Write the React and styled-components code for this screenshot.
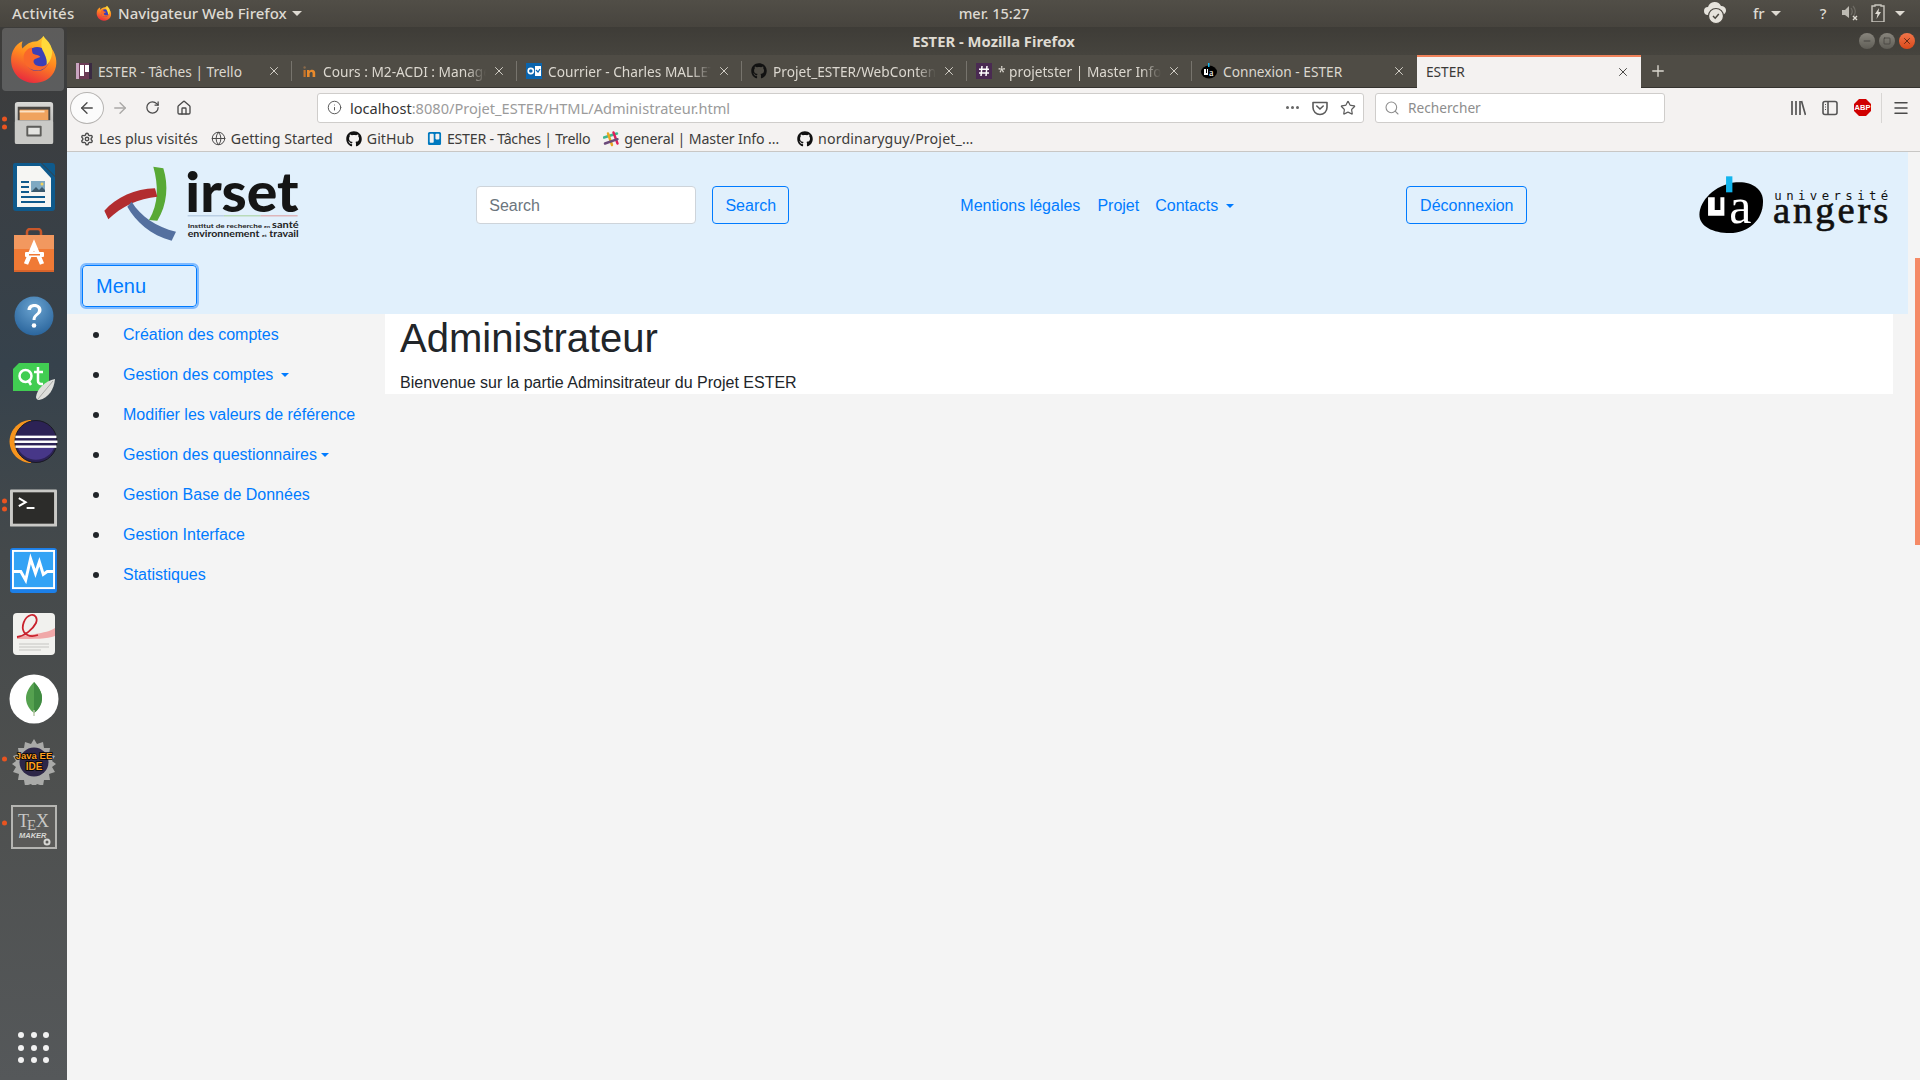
import React from 'react';
import styled, { createGlobalStyle } from 'styled-components';
import { ArrowLeft, ArrowRight, RotateCw, Home, Info, Star, Search, Menu as MenuIcon, Plus, X, Settings, Globe, Minus, Square } from 'lucide-react';
import { FaGithub, FaTrello } from 'react-icons/fa';

const Global = createGlobalStyle`
  html, body { margin: 0; padding: 0; overflow: hidden; background: #f4f4f4; }
  * { box-sizing: border-box; }
`;

const UI_FONT = `"Noto Sans", "Open Sans", sans-serif`;
const PAGE_FONT = `"Liberation Sans", Arial, sans-serif`;

const Screen = styled.div`
  width: 1920px;
  height: 1080px;
  display: flex;
  flex-direction: column;
  overflow: hidden;
  font-family: ${UI_FONT};
`;

/* gnome top bar */
const TopBar = styled.div`
  height: 27px;
  flex: none;
  display: flex;
  align-items: center;
  padding-bottom: 1px;
  background: linear-gradient(#514e47, #47443e);
  color: #dedad2;
  font-size: 15px;
  font-weight: 500;
`;
const TopLeft = styled.div`
  width: 940px;
  display: flex;
  align-items: center;
  padding-left: 12px;
`;
const Activities = styled.span`
  width: 64px;
  letter-spacing: 0.2px;
  white-space: nowrap;
`;
const AppName = styled.span`
  margin-left: 6px;
  white-space: nowrap;
`;
const TopItem = styled.span`
  display: inline-flex;
  align-items: center;
  margin-left: ${(p) => p.$ml || 0}px;
`;
const Clock = styled.div`
  width: 108px;
  text-align: center;
  white-space: nowrap;
  font-size: 14.5px;
`;
const Caret = styled.span`
  display: inline-block;
  width: 0;
  height: 0;
  border-left: 5px solid transparent;
  border-right: 5px solid transparent;
  border-top: 5px solid #dedad2;
  margin-left: ${(p) => p.$ml || 0}px;
`;
const Body = styled.div`
  flex: 1;
  display: flex;
  min-height: 0;
`;

/* launcher */
const Dock = styled.nav`
  width: 67px;
  flex: none;
  display: flex;
  flex-direction: column;
  background: linear-gradient(#3d3c3a 0, #3a3f44 15%, #36424c 32%, #44494b 50%, #4d4f4e 70%, #55585a 100%);
`;
const DockSlot = styled.div`
  position: relative;
  height: 63.7px;
  flex: none;
  display: flex;
  align-items: center;
  justify-content: center;
  padding-top: ${(p) => Math.max(p.$dy || 0, 0) * 2}px;
  overflow: visible;
  svg { flex: none; }
`;
const ActiveSlot = styled(DockSlot)`
  &::before {
    content: '';
    position: absolute;
    inset: 1px 3px 0 2px;
    border-radius: 4px;
    background: rgba(255, 255, 255, 0.17);
  }
  svg { position: relative; }
`;
const RunDots = styled.div`
  position: absolute;
  left: 2px;
  top: 50%;
  transform: translateY(-50%);
  display: flex;
  flex-direction: column;
  gap: 3px;
  span {
    width: 5px;
    height: 5px;
    border-radius: 50%;
    background: #e95420;
  }
`;
const AppGrid = styled.div`
  margin-top: auto;
  margin-bottom: 17px;
  align-self: center;
  display: grid;
  grid-template-columns: repeat(3, 6px);
  gap: 6.5px;
  span {
    width: 6px;
    height: 6px;
    border-radius: 50%;
    background: #f2f2f2;
  }
`;

/* firefox window */
const Window = styled.div`
  flex: 1;
  min-width: 0;
  display: flex;
  flex-direction: column;
`;
const TitleBar = styled.div`
  height: 28px;
  flex: none;
  display: grid;
  grid-template-columns: 1fr auto 1fr;
  align-items: center;
  padding-bottom: 1px;
  background: linear-gradient(#3e3c37, #46443e);
  color: #dfdbd2;
  font-size: 14.8px;
  font-weight: 700;
`;
const WinTitle = styled.span`
  grid-column: 2;
  white-space: nowrap;
`;
const WinControls = styled.div`
  grid-column: 3;
  justify-self: end;
  display: flex;
  gap: 4px;
  padding-right: 5px;
`;
const WinBtn = styled.span`
  width: 16px;
  height: 16px;
  border-radius: 50%;
  display: flex;
  align-items: center;
  justify-content: center;
  color: ${(p) => (p.$close ? '#4a2010' : '#3c3b37')};
  background: ${(p) => (p.$close ? 'linear-gradient(#f0754a, #d9491a)' : 'linear-gradient(#88857d, #5f5d56)')};
`;
const TabStrip = styled.div`
  height: 33px;
  flex: none;
  display: flex;
  background: #4f4c45;
  border-bottom: 1px solid #35332f;
`;
const TabBox = styled.div`
  width: ${(p) => p.$w || 225}px;
  flex: none;
  display: flex;
  align-items: center;
  padding: ${(p) => (p.$active ? '0 11px 2px 9px' : '0 11px 0 9px')};
  gap: 6px;
  color: ${(p) => (p.$active ? '#3b3a38' : '#dcd8d0')};
  font-size: 13.7px;
  background: ${(p) => (p.$active ? '#f4f2f1' : 'transparent')};
  border-top: ${(p) => (p.$active ? '2px solid #f0825a' : 'none')};
  height: ${(p) => (p.$active ? '33px' : '32px')};
  position: relative;
  &::after {
    content: '';
    display: ${(p) => (p.$active || p.$last ? 'none' : 'block')};
    position: absolute;
    right: 0;
    top: 6px;
    bottom: 6px;
    width: 1px;
    background: #77746d;
  }
`;
const TabTitle = styled.span`
  flex: 1;
  min-width: 0;
  white-space: nowrap;
  overflow: hidden;
  -webkit-mask-image: linear-gradient(to right, #000 88%, transparent 100%);
  mask-image: linear-gradient(to right, #000 88%, transparent 100%);
`;
const ShortTitle = styled(TabTitle)`
  -webkit-mask-image: none;
  mask-image: none;
`;
const NewTab = styled.span`
  display: flex;
  align-items: center;
  margin-left: 8px;
  color: #dcd8d0;
`;
const Toolbar = styled.div`
  height: 37px;
  flex: none;
  display: flex;
  align-items: center;
  padding-top: 2px;
  background: #f4f2f1;
  color: #4a4a4a;
`;
const BackButton = styled.span`
  width: 34px;
  height: 32px;
  margin-left: 3px;
  border: 1px solid #b5b3b1;
  border-radius: 50%;
  background: #fbfbfb;
  display: flex;
  align-items: center;
  justify-content: center;
`;
const IconBtn = styled.span`
  width: 32px;
  height: 32px;
  flex: none;
  margin-left: ${(p) => p.$ml || 0}px;
  display: flex;
  align-items: center;
  justify-content: center;
  color: ${(p) => (p.$off ? '#a9a8a6' : 'inherit')};
`;
const Field = styled.div`
  height: 30px;
  width: ${(p) => p.$w}px;
  margin-left: ${(p) => p.$ml}px;
  flex: none;
  display: flex;
  align-items: center;
  padding-right: 1px;
  background: #fff;
  border: 1px solid #cfcdcb;
  border-radius: 3px;
  font-size: 14.6px;
`;
const UrlIcon = styled.span`
  width: ${(p) => p.$w || 32}px;
  flex: none;
  display: flex;
  justify-content: center;
  color: #5c5c5c;
`;
const UrlText = styled.span`
  flex: 1;
  color: #9b9b9b;
  white-space: nowrap;
  b {
    font-weight: 400;
    color: #333;
  }
`;
const Dots = styled.span`
  width: 28px;
  flex: none;
  display: flex;
  justify-content: center;
  gap: 2px;
  i {
    width: 3px;
    height: 3px;
    border-radius: 50%;
    background: #666;
  }
`;
const Placeholder = styled.span`
  color: #8d8d8d;
  font-size: 13.7px;
`;
const ToolDivider = styled.span`
  width: 1px;
  height: 30px;
  margin: 0 3px 0 3px;
  background: #d8d6d4;
`;
const Bookmarks = styled.div`
  height: 27px;
  flex: none;
  display: flex;
  align-items: center;
  padding: 1px 0 0 13px;
  gap: 13px;
  background: #f4f2f1;
  border-bottom: 1px solid #c8c7c5;
  color: #3d3c3a;
  font-size: 14.2px;
`;
const Bookmark = styled.span`
  display: inline-flex;
  align-items: center;
  gap: 5px;
  white-space: nowrap;
  letter-spacing: ${(p) => p.$ls || 0}px;
  margin-left: ${(p) => p.$ml || 0}px;
`;

/* page */
const Page = styled.main`
  position: relative;
  flex: 1;
  min-height: 0;
  padding-right: 12px;
  background: #f4f4f4;
  font-family: ${PAGE_FONT};
  font-size: 16px;
  line-height: 24px;
  color: #212529;
`;
const ScrollThumb = styled.div`
  position: absolute;
  right: 0;
  top: 106px;
  width: 5px;
  height: 287px;
  background: #f58a66;
`;
const Header = styled.header`
  padding-bottom: 7px;
  background: #e1f0fc;
`;
const HeaderRow = styled.div`
  height: 104px;
  display: flex;
  align-items: center;
  padding: 2px 0 0 33px;
`;
const LogoSvg = styled.svg`
  flex: none;
  display: block;
`;
const SearchInput = styled.input`
  width: 220px;
  height: 38px;
  margin-left: ${(p) => p.$ml}px;
  padding: 7px 12px 5px;
  border: 1px solid #ced4da;
  border-radius: 4px;
  background: #fff;
  font: 16px ${PAGE_FONT};
  &::placeholder {
    color: #6c757d;
    opacity: 1;
  }
`;
const OutlineButton = styled.button`
  height: 38px;
  width: ${(p) => p.$w}px;
  margin-left: ${(p) => p.$ml}px;
  padding: 1px 0 0;
  text-align: center;
  border: 1px solid #007bff;
  border-radius: 4px;
  background: transparent;
  color: #007bff;
  font: 16px ${PAGE_FONT};
`;
const NavLink = styled.a`
  color: #007bff;
  padding: 9px 8px 7px;
  margin-left: ${(p) => p.$ml || 0}px;
  white-space: nowrap;
`;
const DropCaret = styled.span`
  display: inline-block;
  width: 0;
  height: 0;
  margin-left: ${(p) => p.$ml}px;
  vertical-align: 3px;
  border-top: 4.8px solid #007bff;
  border-left: 4.8px solid transparent;
  border-right: 4.8px solid transparent;
`;
const UaSpacer = styled.span`
  width: 170px;
  flex: none;
`;
const MenuButton = styled.button`
  display: block;
  width: 115px;
  height: 42px;
  margin: 9px 0 0 15px;
  padding: 0 13px;
  text-align: left;
  border: 1px solid #007bff;
  outline: 2px solid #7fbaff;
  outline-offset: 0;
  border-radius: 4px;
  background: transparent;
  color: #007bff;
  font: 20px ${PAGE_FONT};
`;
const Columns = styled.div`
  display: flex;
  align-items: flex-start;
`;
const SideList = styled.ul`
  width: 318px;
  flex: none;
  margin: 0;
  padding: 0 0 0 40px;
  list-style: none;
`;
const SideItem = styled.li`
  position: relative;
  height: 40px;
  padding: 9px 16px 7px;
  white-space: nowrap;
  a { color: #007bff; }
  &::before {
    content: '';
    position: absolute;
    left: -14px;
    top: 18px;
    width: 6px;
    height: 6px;
    border-radius: 50%;
    background: #212529;
  }
`;
const Content = styled.section`
  flex: 1;
  margin-right: 15px;
  padding: 0 15px;
  background: #fff;
`;
const Title = styled.h1`
  margin: 0 0 8px;
  font-size: 40px;
  font-weight: 500;
  line-height: 48px;
`;
const Intro = styled.p`
  margin: 0;
  height: 24px;
  padding-top: 1px;
`;

/* drawings */
const Firefox = ({ size, id }) => (
  <svg width={size} height={size} viewBox="0 0 48 48">
    <defs>
      <linearGradient id={id} x1="0.7" y1="0" x2="0.3" y2="1">
        <stop offset="0" stopColor="#ffcb2e" />
        <stop offset="0.45" stopColor="#ff8a1f" />
        <stop offset="1" stopColor="#e8263f" />
      </linearGradient>
    </defs>
    <path d="M33 2c1 5 4 7 8 12 5 7 6 16 2 23-4 7-11 10-19 10C11 47 2 37 2 25 2 17 6 10 13 7c-1 3-1 5 0 7 3-4 8-7 14-7 2-1 5-3 6-5z" fill={`url(#${id})`} />
    <circle cx="27" cy="24" r="11.500" fill="#3b3fb6" />
    <path d="M22 13c-5 1-8 5-8 10 0 7 6 12 13 12 5 0 9-3 11-7-3 3-8 4-12 2-3-2-3-5-1-6l5-2c-1-2-5-2-7-3-1-2-1-4-1-6z" fill="#f9682a" />
    <path d="M33 2c-2 5-3 10 0 15 2 4 4 8 3 13 5-5 7-13 4-19-2-4-5-6-7-9z" fill="#ffd93b" />
  </svg>
);

const FilesIcon = () => (
  <svg width="44" height="46" viewBox="0 0 46 46">
    <defs>
      <linearGradient id="cab" x1="0" y1="0" x2="0" y2="1">
        <stop offset="0" stopColor="#d9d9d6" />
        <stop offset="1" stopColor="#a6a6a3" />
      </linearGradient>
    </defs>
    <rect x="3" y="1" width="40" height="44" rx="3" fill="url(#cab)" />
    <rect x="6" y="6" width="34" height="15" fill="#4a4743" />
    <rect x="8" y="9" width="30" height="11" fill="#f0a35e" />
    <rect x="8" y="10" width="26" height="2" fill="#fbe1c4" />
    <rect x="3" y="20" width="40" height="25" rx="2" fill="#c9c9c6" />
    <rect x="15" y="26" width="16" height="11" rx="1" fill="#5d5d5a" />
    <rect x="17" y="28" width="12" height="7" fill="#e4e4e1" />
  </svg>
);
const WriterIcon = () => (
  <svg width="42" height="48" viewBox="0 0 42 48">
    <path d="M2 0h26l14 14v31a3 3 0 0 1-3 3H3a3 3 0 0 1-3-3V2a2 2 0 0 1 2-2z" fill="#0f5a8c" />
    <path d="M4 3h23l11 12v29H4z" fill="#f6f6f3" />
    <path d="M29 0l13 13V3a3 3 0 0 0-3-3z" fill="#0f5a8c" />
    <rect x="8" y="18" width="8" height="2" fill="#0f5a8c" />
    <rect x="8" y="23" width="8" height="2" fill="#0f5a8c" />
    <rect x="8" y="28" width="8" height="2" fill="#0f5a8c" />
    <rect x="8" y="33" width="24" height="2" fill="#0f5a8c" />
    <rect x="8" y="38" width="24" height="2" fill="#0f5a8c" />
    <rect x="18" y="18" width="14" height="11" fill="#7fa9c2" />
    <path d="M18 29l5-5 3 3 3-3 3 3v2z" fill="#3c5a6d" />
    <circle cx="29" cy="21" r="1.500" fill="#f1d35c" />
  </svg>
);
const StoreIcon = () => (
  <svg width="42" height="44" viewBox="0 0 42 44">
    <path d="M14 8V4a3 3 0 0 1 3-3h8a3 3 0 0 1 3 3v4" fill="none" stroke="#c9572a" strokeWidth="2.500" />
    <path d="M1 7h40v37H1z" fill="#f07a35" />
    <path d="M1 7h40v14H1z" fill="#f2985f" />
    <path d="M1 42h40v2H1z" fill="#d9642a" />
    <path d="M13 36l8-19 8 19" fill="none" stroke="#fff" strokeWidth="4.500" />
    <rect x="12" y="24" width="19" height="5" rx="1" fill="#fff" />
    <rect x="16" y="26" width="11" height="1.500" fill="#f07a35" />
  </svg>
);
const HelpIcon = () => (
  <svg width="40" height="40" viewBox="0 0 40 40">
    <defs>
      <radialGradient id="help" cx="0.5" cy="0.3" r="0.8">
        <stop offset="0" stopColor="#6aa3d0" />
        <stop offset="1" stopColor="#225d96" />
      </radialGradient>
    </defs>
    <circle cx="20" cy="20" r="19.500" fill="url(#help)" />
    <path d="M13.500 14c0-4 3-6 7-6s7 2.500 7 6c0 5-6 5-6 10h-3c0-6 5.500-6 5.500-10 0-2-1.500-3-3.500-3s-3.500 1-3.500 3z" fill="#fff" />
    <circle cx="20" cy="29.500" r="2.300" fill="#fff" />
  </svg>
);
const QtIcon = () => (
  <svg width="42" height="38" viewBox="0 0 42 38">
    <path d="M6 0h30v28H0V6z" fill="#41cd52" />
    <circle cx="12.500" cy="13" r="6" fill="none" stroke="#fff" strokeWidth="2.500" />
    <path d="M15 17l3 5" stroke="#fff" strokeWidth="2.500" />
    <path d="M25 4v14a3 3 0 0 0 3 3h2M21 9h9" fill="none" stroke="#fff" strokeWidth="2.500" />
    <path d="M42 16c-1 10-6 19-16 21-2 0-3-2-3-3 1-8 9-16 19-18z" fill="#dedfdc" />
    <path d="M40 18L25 36" stroke="#9a9b98" strokeWidth="0.800" />
  </svg>
);
const EclipseIcon = () => (
  <svg width="50" height="43" viewBox="0 0 50 44">
    <path d="M22 0C10 0 0 10 0 22s10 22 22 22z" fill="#f7941e" />
    <circle cx="27" cy="22" r="21.500" fill="#2c2255" stroke="#1a1a22" strokeWidth="1" />
    <path d="M8 27h38a20 20 0 0 1-38 0z" fill="#473788" />
    <rect x="6" y="16" width="42" height="2.500" fill="#fff" />
    <rect x="5" y="21" width="44" height="2.500" fill="#fff" />
    <rect x="6" y="26" width="42" height="2.500" fill="#fff" />
  </svg>
);
const TerminalIcon = () => (
  <svg width="47" height="38" viewBox="0 0 48 38">
    <rect width="48" height="38" rx="1" fill="#c9c9c6" />
    <rect x="3" y="3" width="42" height="32" fill="#2c2c2a" />
    <path d="M9 9l7 4-7 4" fill="none" stroke="#fff" strokeWidth="2" />
    <rect x="17" y="18" width="8" height="2" fill="#fff" />
  </svg>
);
const MonitorIcon = () => (
  <svg width="47" height="45" viewBox="0 0 48 46">
    <rect width="48" height="46" rx="3" fill="#1c7fe8" />
    <rect x="3" y="3" width="42" height="38" fill="#33a3f5" stroke="#fff" strokeWidth="2" />
    <path d="M3 24h8l5 9 5-22 5 15 4-12 4 13 4-3h7" fill="none" stroke="#fff" strokeWidth="3" />
  </svg>
);
const EvinceIcon = () => (
  <svg width="42" height="42" viewBox="0 0 42 42">
    <rect width="42" height="42" rx="4" fill="#f1f1ee" />
    <path d="M4 24c6-2 30-3 38-9v8c-8 3-20 3-38 3z" fill="#f0a8a8" />
    <path d="M4 24c8-1 16-8 19-14 2-5-1-9-5-8-7 2-10 12-7 17 3 4 8 5 14 3" fill="none" stroke="#c9222d" strokeWidth="1.800" />
    <path d="M6 31h30M6 34h30M6 37h22" stroke="#c5c5c2" strokeWidth="1" />
  </svg>
);
const MongoIcon = () => (
  <svg width="50" height="50" viewBox="0 0 50 50">
    <circle cx="25" cy="25" r="24.500" fill="#fff" />
    <path d="M25 8c5 5 8 11 8 16 0 7-4 12-8 15-4-3-8-8-8-15 0-5 3-11 8-16z" fill="#55a14f" />
    <path d="M25 8c5 5 8 11 8 16 0 7-4 12-8 15z" fill="#3f8a41" />
    <path d="M25 36v6" stroke="#b8c9a8" strokeWidth="1.500" />
  </svg>
);
const JavaIcon = () => (
  <svg width="50" height="46" viewBox="0 0 50 46">
    <path d="M25 0l3 5 6-2 1 6 6 0-1 6 6 2-3 5 4 3-4 3 3 5-6 2 1 6-6 0-1 6-6-2-3 3-3-3-6 2-1-6-6 0 1-6-6-2 3-5-4-3 4-3-3-5 6-2-1-6 6 0 1-6 6 2z" fill="#a9aaa8" />
    <circle cx="25" cy="23" r="14.500" fill="#2d2748" />
    <text x="25" y="20" textAnchor="middle" fontFamily="Liberation Sans" fontWeight="700" fontSize="9.500" fill="#ffa020" stroke="#000" strokeWidth="1.500" paintOrder="stroke">Java EE</text>
    <text x="25" y="31" textAnchor="middle" fontFamily="Liberation Sans" fontWeight="700" fontSize="10" fill="#ffa020" stroke="#000" strokeWidth="1.500" paintOrder="stroke">IDE</text>
  </svg>
);
const TexIcon = () => (
  <svg width="46" height="44" viewBox="0 0 46 44">
    <rect x="1" y="1" width="44" height="42" fill="#5b5b59" stroke="#b5b5b2" strokeWidth="2" />
    <text x="7" y="22" fontFamily="Liberation Serif" fontSize="18" fill="#c8c8c5">T</text>
    <text x="16" y="25" fontFamily="Liberation Serif" fontSize="15" fill="#c8c8c5">E</text>
    <text x="25" y="22" fontFamily="Liberation Serif" fontSize="18" fill="#c8c8c5">X</text>
    <text x="8" y="33" fontFamily="Liberation Sans" fontWeight="700" fontStyle="italic" fontSize="7.500" fill="#d8d8d5">MAKER</text>
    <circle cx="36" cy="37" r="2.500" fill="none" stroke="#d8d8d5" strokeWidth="2" />
  </svg>
);

const IrsetLogo = () => (
  <LogoSvg width="203.300" height="80" viewBox="300 45 610 240">
    <path d="M460 50l30 5c16 50 12 110-18 157l-25-2c30-50 28-105 13-160z" fill="#58a935" />
    <path d="M313 182l12 26c40-40 90-62 147-68l-7-25c-60 2-115 26-152 67z" fill="#b22d2f" />
    <path d="M395 155l-13 15c25 45 70 85 133 102l13-27c-60-15-105-45-133-90z" fill="#54709f" />
    <text x="556" y="187" fontFamily="Lato" fontWeight="900" fontSize="168" textLength="340" lengthAdjust="spacingAndGlyphs" fill="#151515">irset</text>
    <rect x="563" y="196" width="109" height="3" fill="#a9bfd8" />
    <rect x="672" y="196" width="110" height="3" fill="#a6cf98" />
    <rect x="782" y="196" width="111" height="3" fill="#dd9a9a" />
    <text x="563" y="234" fontFamily="Lato" fontWeight="700" fontSize="19" textLength="333" lengthAdjust="spacingAndGlyphs" fill="#222">
      Institut de recherche <tspan fontSize="13">en</tspan> <tspan fontSize="26">santé</tspan>
    </text>
    <text x="563" y="262" fontFamily="Lato" fontWeight="700" fontSize="26" textLength="333" lengthAdjust="spacingAndGlyphs" fill="#222">
      environnement <tspan fontSize="13">et</tspan> travail
    </text>
  </LogoSvg>
);
const AngersLogo = () => (
  <LogoSvg width="196.700" height="63.300" viewBox="110 70 590 190">
    <path d="M117 195c0-40 45-90 110-97 45-4 81 18 81 58 0 55-45 94-100 94-50 0-91-20-91-55z" fill="#000" />
    <rect x="197" y="80" width="19" height="48" fill="#12b5ee" />
    <path d="M143 143h20v38h17v-38h12v55h-49z" fill="#fff" />
    <text x="207" y="221" fontFamily="Liberation Serif" fontSize="150" fill="#fff">a</text>
    <text x="342" y="152" fontFamily="DejaVu Sans Mono" fontSize="37" textLength="342" lengthAdjust="spacing" fill="#111">université</text>
    <text x="338" y="219" fontFamily="Liberation Serif" fontSize="116" stroke="#111" strokeWidth="2" textLength="346" lengthAdjust="spacing" fill="#111">angers</text>
  </LogoSvg>
);

const UaFavicon = () => (
  <svg width="16" height="16" viewBox="0 0 16 16">
    <ellipse cx="8" cy="9" rx="8" ry="6.500" fill="#000" />
    <rect x="7" y="0" width="1.500" height="4" fill="#12b5ee" />
    <path d="M3 6h2v4h1V6h1v6H3z" fill="#fff" />
    <text x="8" y="13" fontFamily="Liberation Serif" fontSize="10" fill="#fff">a</text>
  </svg>
);
const SlackTile = () => (
  <svg width="16" height="16" viewBox="0 0 16 16">
    <rect width="16" height="16" fill="#4a2a52" />
    <path d="M6 3L5 13M11 3l-1 10M3 6.200h10M3 10h10" stroke="#fff" strokeWidth="1.500" />
  </svg>
);
const TrelloTile = () => (
  <svg width="16" height="16" viewBox="0 0 16 16">
    <rect width="16" height="16" fill="#6b3b55" />
    <rect y="0" width="3" height="16" fill="#c9a4c0" />
    <rect x="13" y="0" width="3" height="16" fill="#3a2a42" />
    <rect x="4" y="2" width="4" height="11" fill="#fff" />
    <rect x="9" y="2" width="4" height="7" fill="#fff" />
  </svg>
);
const MoocIcon = () => (
  <svg width="16" height="16" viewBox="0 0 16 16">
    <path d="M6 14V7h2.500v1.200C9.200 7.300 10 6.800 11.200 6.800c2 0 3 1.300 3 3.300V14h-2.600v-3.400c0-.9-.4-1.500-1.200-1.500s-1.800.6-1.800 1.500V14z" fill="#e98a2c" />
    <rect x="2.500" y="7" width="2.200" height="7" fill="#c9752a" />
    <circle cx="3.600" cy="4.500" r="1.200" fill="#8a6a4a" />
  </svg>
);
const OutlookIcon = () => (
  <svg width="16" height="16" viewBox="0 0 16 16">
    <rect width="16" height="16" fill="#0a64ad" />
    <rect x="9" y="3" width="6" height="10" fill="#fff" />
    <circle cx="4.800" cy="8" r="2.600" fill="none" stroke="#fff" strokeWidth="1.600" />
    <path d="M10 7l2 2 2-3" fill="none" stroke="#0a64ad" strokeWidth="1.200" />
  </svg>
);
const SlackIcon = () => (
  <svg width="16" height="16" viewBox="0 0 16 16">
    <path d="M1 6.500l13-4" stroke="#3eb890" strokeWidth="2.400" strokeLinecap="round" />
    <path d="M5 2.500l4 11.500" stroke="#e9a820" strokeWidth="2.400" strokeLinecap="round" />
    <path d="M10.500 1.500l4 11" stroke="#e01e5a" strokeWidth="2.400" strokeLinecap="round" />
    <path d="M2 12.500l12.500-4.300" stroke="#6b4a7a" strokeWidth="2.400" strokeLinecap="round" />
  </svg>
);
const LibraryIcon = () => (
  <svg width="16" height="16" viewBox="0 0 16 16" fill="none" stroke="#555" strokeWidth="1.700">
    <path d="M2 1v14M6 1v14M10 1v14M11.500 1l4 14" />
  </svg>
);
const SidebarIcon = () => (
  <svg width="16" height="16" viewBox="0 0 16 16" fill="none" stroke="#555" strokeWidth="1.600">
    <rect x="1" y="1.500" width="14" height="13" rx="2" />
    <path d="M6 1.500v13" />
    <path d="M3 4.500h1M3 7h1M3 9.500h1" strokeWidth="1" />
  </svg>
);
const AbpIcon = () => (
  <svg width="17" height="17" viewBox="0 0 17 17">
    <path d="M5 0h7l5 5v7l-5 5H5l-5-5V5z" fill="#d00000" />
    <text x="8.500" y="11.300" textAnchor="middle" fontFamily="Liberation Sans" fontWeight="700" fontSize="7.500" fill="#fff">ABP</text>
  </svg>
);
const PocketIcon = () => (
  <svg width="16" height="16" viewBox="0 0 16 16" fill="none" stroke="#5a5a5a" strokeWidth="1.600">
    <path d="M1 2.500h14v5a7 7 0 0 1-14 0z" strokeLinejoin="round" />
    <path d="M4.800 6L8 9l3.200-3" strokeLinecap="round" />
  </svg>
);
const CloudIcon = () => (
  <svg width="24" height="24" viewBox="0 0 24 24">
    <path d="M5 14a4 4 0 0 1 0-8 7 7 0 0 1 13-1 4.500 4.500 0 0 1 1 9z" fill="#e6e3dc" />
    <circle cx="13" cy="15" r="7.500" fill="#e6e3dc" stroke="#4a4740" strokeWidth="1.200" />
    <path d="M10 15l2.200 2.200 3.600-4.200" fill="none" stroke="#4a4740" strokeWidth="1.500" />
  </svg>
);
const VolumeIcon = () => (
  <svg width="18" height="16" viewBox="0 0 18 16">
    <path d="M1 5h3l4-4v12L4 10H1z" fill="#bdbab2" />
    <path d="M10 3a6 6 0 0 1 0 7M12 1a9 9 0 0 1 1 10" fill="none" stroke="#6f6c65" strokeWidth="1.200" />
    <path d="M12 11l4 4M16 11l-4 4" stroke="#dedad2" strokeWidth="1.400" />
  </svg>
);
const BatteryIcon = () => (
  <svg width="14" height="18" viewBox="0 0 14 18">
    <path d="M4 2V1h6v1h3v16H1V2z" fill="none" stroke="#c9c6be" strokeWidth="1.400" />
    <path d="M8 4L4 10h2.500L5.500 15l4.500-7H7.500z" fill="#dedad2" />
  </svg>
);

const tabs = [
  { icon: <TrelloTile />, title: 'ESTER - Tâches | Trello' },
  { icon: <MoocIcon />, title: 'Cours : M2-ACDI : Management de projet' },
  { icon: <OutlookIcon />, title: 'Courrier - Charles MALLET - Outlook' },
  { icon: <FaGithub size={16} color="#111" />, title: 'Projet_ESTER/WebContent/HTML' },
  { icon: <SlackTile />, title: '* projetster | Master Info M2 ACDI' },
  { icon: <UaFavicon />, title: 'Connexion - ESTER' },
];

const bookmarks = [
  { icon: <Settings size={14} strokeWidth={2.4} color="#4c4c4c" />, label: 'Les plus visités' },
  { icon: <Globe size={15} strokeWidth={1.6} color="#4c4c4c" />, label: 'Getting Started' },
  { icon: <FaGithub size={16} color="#111" />, label: 'GitHub' },
  { icon: <FaTrello size={15} color="#0079bf" />, label: 'ESTER - Tâches | Trello', ls: -0.25 },
  { icon: <SlackIcon />, label: 'general | Master Info …', ls: -0.15 },
  { icon: <FaGithub size={16} color="#111" />, label: 'nordinaryguy/Projet_…', ls: 0.15, ml: 5 },
];

const dockApps = [
  { icon: <FilesIcon />, dots: 2 },
  { icon: <WriterIcon />, dy: 0.5 },
  { icon: <StoreIcon /> },
  { icon: <HelpIcon />, dy: 2 },
  { icon: <QtIcon />, dy: 5 },
  { icon: <EclipseIcon />, dy: 1 },
  { icon: <TerminalIcon />, dots: 2, dy: 3 },
  { icon: <MonitorIcon />, dy: 2 },
  { icon: <EvinceIcon />, dy: 2 },
  { icon: <MongoIcon />, dy: 3 },
  { icon: <JavaIcon />, dots: 1, dy: 3 },
  { icon: <TexIcon />, dots: 1, dy: 4 },
];

const sideLinks = [
  { label: 'Création des comptes' },
  { label: 'Gestion des comptes', caret: 8 },
  { label: 'Modifier les valeurs de référence' },
  { label: 'Gestion des questionnaires', caret: 4 },
  { label: 'Gestion Base de Données' },
  { label: 'Gestion Interface' },
  { label: 'Statistiques' },
];

function App() {
  return (
    <Screen>
      <Global />
      <TopBar>
        <TopLeft>
          <Activities>Activités</Activities>
          <TopItem $ml={20}><Firefox size={16} id="ffTop" /></TopItem>
          <AppName>Navigateur Web Firefox</AppName>
          <Caret $ml={5} />
        </TopLeft>
        <Clock>mer. 15:27</Clock>
        <TopItem $ml={655}><CloudIcon /></TopItem>
        <TopItem $ml={26}>fr</TopItem>
        <Caret $ml={6} />
        <TopItem $ml={39}>?</TopItem>
        <TopItem $ml={15}><VolumeIcon /></TopItem>
        <TopItem $ml={12}><BatteryIcon /></TopItem>
        <Caret $ml={10} />
      </TopBar>
      <Body>
        <Dock>
          <ActiveSlot><Firefox size={50} id="ffDock" /></ActiveSlot>
          {dockApps.map((app, i) => (
            <DockSlot key={i} $dy={app.dy}>
              {app.dots && (
                <RunDots>
                  {Array.from({ length: app.dots }).map((_, j) => <span key={j} />)}
                </RunDots>
              )}
              {app.icon}
            </DockSlot>
          ))}
          <AppGrid>
            {Array.from({ length: 9 }).map((_, i) => <span key={i} />)}
          </AppGrid>
        </Dock>
        <Window>
          <TitleBar>
            <WinTitle>ESTER - Mozilla Firefox</WinTitle>
            <WinControls>
              <WinBtn><Minus size={10} strokeWidth={2} /></WinBtn>
              <WinBtn><Square size={8} strokeWidth={2} /></WinBtn>
              <WinBtn $close><X size={10} strokeWidth={2} /></WinBtn>
            </WinControls>
          </TitleBar>
          <TabStrip>
            {tabs.map((t, i) => (
              <TabBox key={i} $last={i === tabs.length - 1}>
                {t.icon}
                {t.title.length > 24 ? <TabTitle>{t.title}</TabTitle> : <ShortTitle>{t.title}</ShortTitle>}
                <X size={14} strokeWidth={1.6} />
              </TabBox>
            ))}
            <TabBox $active $w={224}>
              <ShortTitle>ESTER</ShortTitle>
              <X size={14} strokeWidth={1.6} />
            </TabBox>
            <NewTab><Plus size={18} strokeWidth={1.8} /></NewTab>
          </TabStrip>
          <Toolbar>
            <BackButton><ArrowLeft size={18} strokeWidth={1.8} /></BackButton>
            <IconBtn $off><ArrowRight size={18} strokeWidth={1.8} /></IconBtn>
            <IconBtn><RotateCw size={15} strokeWidth={2} /></IconBtn>
            <IconBtn><Home size={16} strokeWidth={2} /></IconBtn>
            <Field $w={1047} $ml={117}>
              <UrlIcon><Info size={15} strokeWidth={1.6} /></UrlIcon>
              <UrlText><b>localhost</b>:8080/Projet_ESTER/HTML/Administrateur.html</UrlText>
              <Dots><i /><i /><i /></Dots>
              <UrlIcon $w={28}><PocketIcon /></UrlIcon>
              <UrlIcon $w={28}><Star size={16} strokeWidth={1.8} /></UrlIcon>
            </Field>
            <Field $w={290} $ml={11}>
              <UrlIcon><Search size={16} strokeWidth={1.6} color="#8d8d8d" /></UrlIcon>
              <Placeholder>Rechercher</Placeholder>
            </Field>
            <IconBtn $ml={117}><LibraryIcon /></IconBtn>
            <IconBtn><SidebarIcon /></IconBtn>
            <IconBtn><AbpIcon /></IconBtn>
            <ToolDivider />
            <IconBtn><MenuIcon size={18} strokeWidth={2} /></IconBtn>
          </Toolbar>
          <Bookmarks>
            {bookmarks.map((b, i) => (
              <Bookmark key={i} $ls={b.ls} $ml={b.ml}>{b.icon}{b.label}</Bookmark>
            ))}
          </Bookmarks>
          <Page>
            <Header>
              <HeaderRow>
                <IrsetLogo />
                <SearchInput $ml={173} placeholder="Search" />
                <OutlineButton $ml={16} $w={77}>Search</OutlineButton>
                <NavLink $ml={163}>Mentions légales</NavLink>
                <NavLink $ml={1}>Projet</NavLink>
                <NavLink>Contacts<DropCaret $ml={8} /></NavLink>
                <OutlineButton $ml={164} $w={121}>Déconnexion</OutlineButton>
                <UaSpacer />
                <AngersLogo />
              </HeaderRow>
              <MenuButton>Menu</MenuButton>
            </Header>
            <Columns>
              <SideList>
                {sideLinks.map((l) => (
                  <SideItem key={l.label}>
                    <a>{l.label}{l.caret && <DropCaret $ml={l.caret} />}</a>
                  </SideItem>
                ))}
              </SideList>
              <Content>
                <Title>Administrateur</Title>
                <Intro>Bienvenue sur la partie Adminsitrateur du Projet ESTER</Intro>
              </Content>
            </Columns>
            <ScrollThumb />
          </Page>
        </Window>
      </Body>
    </Screen>
  );
}

export default App;
